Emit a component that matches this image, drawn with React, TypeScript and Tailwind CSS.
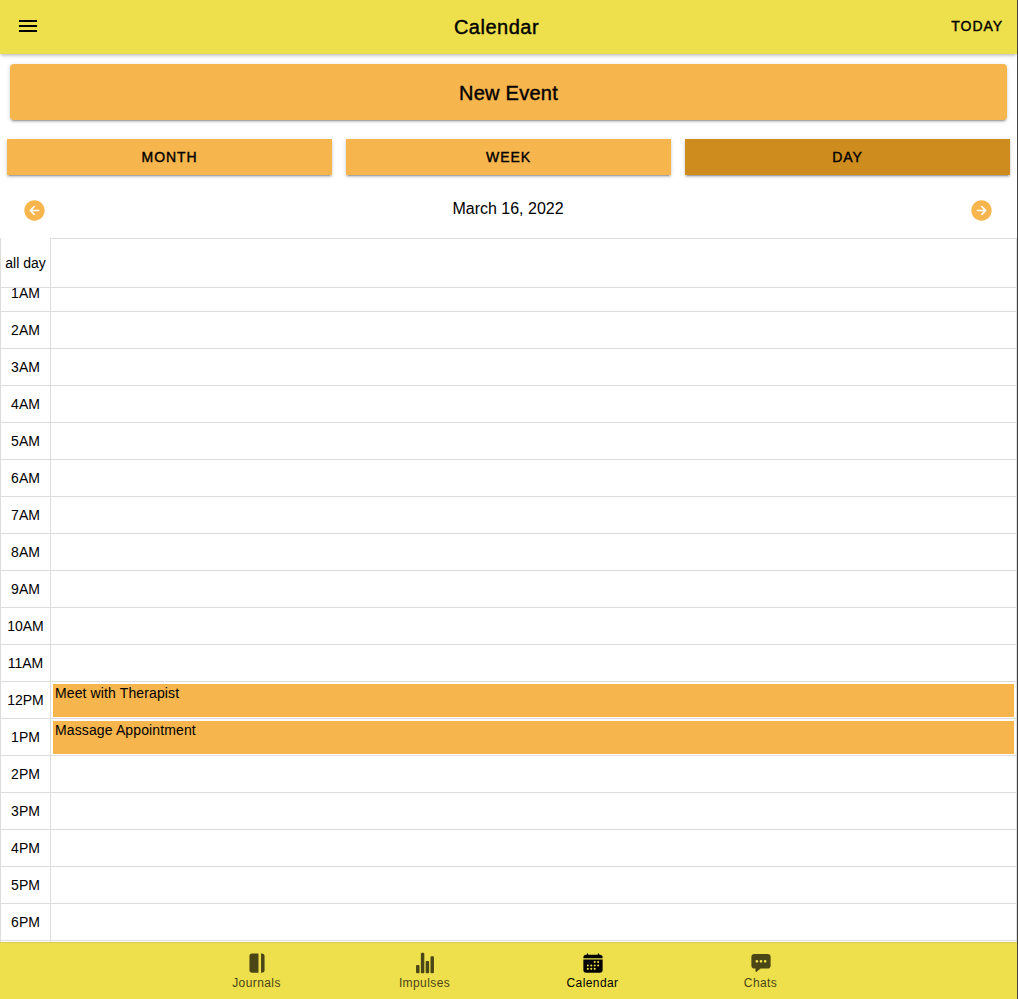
import React from "react";
import { IoMdMenu } from "react-icons/io";
import {
  IoArrowBackCircle,
  IoArrowForwardCircle,
  IoCalendar,
  IoChatboxEllipses,
  IoJournal,
  IoStatsChart,
} from "react-icons/io5";

const hours: { label: string; event?: string }[] = [
  { label: "1AM" },
  { label: "2AM" },
  { label: "3AM" },
  { label: "4AM" },
  { label: "5AM" },
  { label: "6AM" },
  { label: "7AM" },
  { label: "8AM" },
  { label: "9AM" },
  { label: "10AM" },
  { label: "11AM" },
  { label: "12PM", event: "Meet with Therapist" },
  { label: "1PM", event: "Massage Appointment" },
  { label: "2PM" },
  { label: "3PM" },
  { label: "4PM" },
  { label: "5PM" },
  { label: "6PM" },
  { label: "" },
];

const shadow =
  "shadow-[0_3px_1px_-2px_rgba(0,0,0,0.2),0_2px_2px_0_rgba(0,0,0,0.14),0_1px_5px_0_rgba(0,0,0,0.12)]";
const medium = "[-webkit-text-stroke:0.4px_#000]";

function Header() {
  return (
    <header className="relative z-10 flex h-[54px] shrink-0 items-center bg-[#eedf4c] shadow-[0_2px_4px_-1px_rgba(0,0,0,0.25),0_1px_4px_0_rgba(0,0,0,0.1)]">
      <button aria-label="Menu" className="mb-0.5 w-[52px] pl-4">
        <IoMdMenu className="h-6 w-6" />
      </button>
      <h1 className={`flex-1 text-center text-xl leading-6 tracking-[0.5px] ${medium}`}>
        Calendar
      </h1>
      <button
        className={`mb-0.5 flex w-[76px] justify-end pr-[14px] text-sm tracking-[0.95px] ${medium}`}
      >
        TODAY
      </button>
    </header>
  );
}

function Tab({ label, active }: { label: string; active?: boolean }) {
  return (
    <button
      className={`h-9 flex-1 text-sm tracking-[0.9px] ${medium} ${shadow} ${
        active ? "bg-[#cd8c1d]" : "bg-[#f6b54d]"
      }`}
    >
      {label}
    </button>
  );
}

function HourRow({ label, event }: { label: string; event?: string }) {
  return (
    <div className="flex h-[37px] shrink-0">
      <div className="flex w-[51px] items-center justify-center border-x border-b border-[#ddd] text-sm">
        {label}
      </div>
      <div className="flex-1 border-r border-b border-[#ddd] px-0.5 py-0.5">
        {event && (
          <div className="h-[33px] bg-[#f6b54d] px-0.5 text-sm leading-[18px] tracking-[0.12px]">
            {event}
          </div>
        )}
      </div>
    </div>
  );
}

function NavItem({
  label,
  icon,
  active,
}: {
  label: string;
  icon: React.ReactNode;
  active?: boolean;
}) {
  return (
    <button
      className={`flex w-[168px] flex-col items-center pt-[9px] text-xs tracking-[0.4px] ${
        active ? "text-black" : "text-[#4a4616]"
      }`}
    >
      {icon}
      <span className="leading-[18px]">{label}</span>
    </button>
  );
}

export default function App() {
  return (
    <div className="flex h-[999px] w-[1018px] flex-col overflow-hidden border-r border-[#444] bg-white font-['Liberation_Sans',Arial,sans-serif] text-black">
      <Header />
      <button
        className={`mx-[10px] mt-[10px] h-14 shrink-0 rounded bg-[#f6b54d] text-xl tracking-[0.25px] ${medium} ${shadow}`}
      >
        <span className="block pt-0.5">New Event</span>
      </button>
      <div className="mx-[7px] mt-[19px] flex shrink-0 gap-[14px]">
        <Tab label="MONTH" />
        <Tab label="WEEK" />
        <Tab label="DAY" active />
      </div>
      <div className="flex h-[63px] shrink-0 items-center justify-between pr-[23px] pl-[22px]">
        <button aria-label="Previous day" className="mt-[7px]">
          <IoArrowBackCircle className="h-[25px] w-[25px] text-[#f6b54d]" />
        </button>
        <span className="mt-[5px] text-base">March 16, 2022</span>
        <button aria-label="Next day" className="mt-[7px]">
          <IoArrowForwardCircle className="h-[25px] w-[25px] text-[#f6b54d]" />
        </button>
      </div>
      <div className="flex h-[50px] shrink-0">
        <div className="flex w-[51px] items-center justify-center border-x border-b border-[#ddd] text-sm whitespace-nowrap">
          all day
        </div>
        <div className="flex-1 border-t border-r border-b border-[#ddd]" />
      </div>
      <main className="h-[654px] shrink-0 overflow-hidden">
        <div className="-mt-[13px] flex flex-col">
          {hours.map((h, i) => (
            <HourRow key={i} label={h.label} event={h.event} />
          ))}
        </div>
      </main>
      <nav className="flex h-[57px] shrink-0 justify-center border-t border-[#d9cb50] bg-[#eedf4c]">
        <NavItem label="Journals" icon={<IoJournal className="h-[22px] w-[22px]" />} />
        <NavItem label="Impulses" icon={<IoStatsChart className="h-[22px] w-[22px]" />} />
        <NavItem label="Calendar" icon={<IoCalendar className="h-[22px] w-[22px]" />} active />
        <NavItem label="Chats" icon={<IoChatboxEllipses className="h-[22px] w-[22px]" />} />
      </nav>
    </div>
  );
}
